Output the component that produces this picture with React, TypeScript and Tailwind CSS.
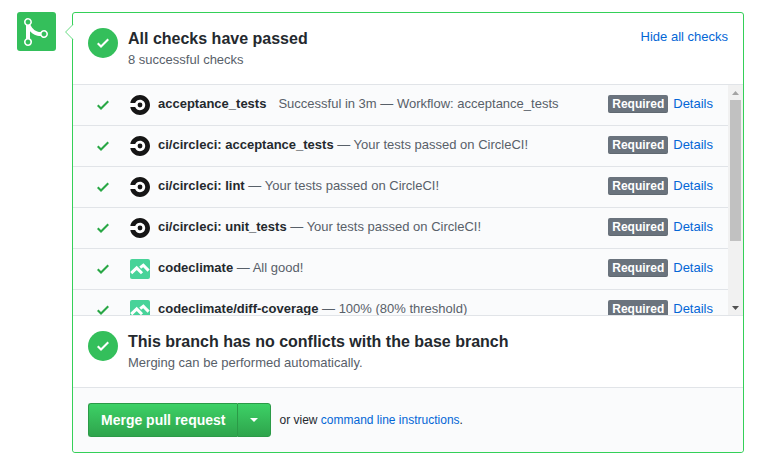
import type { ReactNode } from "react";

type Check = {
  name: string;
  detail: string;
  icon: "circleci" | "codeclimate";
  separator?: boolean;
};

const checks: Check[] = [
  { name: "acceptance_tests", detail: "Successful in 3m — Workflow: acceptance_tests", icon: "circleci", separator: false },
  { name: "ci/circleci: acceptance_tests", detail: "Your tests passed on CircleCI!", icon: "circleci" },
  { name: "ci/circleci: lint", detail: "Your tests passed on CircleCI!", icon: "circleci" },
  { name: "ci/circleci: unit_tests", detail: "Your tests passed on CircleCI!", icon: "circleci" },
  { name: "codeclimate", detail: "All good!", icon: "codeclimate" },
  { name: "codeclimate/diff-coverage", detail: "100% (80% threshold)", icon: "codeclimate" },
];

function CheckMark({ className }: { className: string }) {
  return (
    <svg width="12" height="16" viewBox="0 0 12 16" className={className} aria-hidden="true">
      <path fill="currentColor" d="M12 5l-8 8-4-4 1.5-1.5L4 10l6.5-6.5L12 5z" />
    </svg>
  );
}

function MergeIcon() {
  return (
    <svg width="24" height="32" viewBox="0 0 12 16" aria-hidden="true">
      <path
        fill="currentColor"
        d="M10 7c-.73 0-1.38.41-1.73 1.02V8C7.22 7.98 6 7.64 5.14 6.98c-.75-.58-1.5-1.61-1.89-2.44A1.993 1.993 0 0 0 2 .99C.89.99 0 1.89 0 3a2 2 0 0 0 1 1.72v6.56c-.59.35-1 .99-1 1.72 0 1.11.89 2 2 2a1.993 1.993 0 0 0 1-3.72V7.67c.67.7 1.44 1.27 2.3 1.69.86.42 2.03.63 2.97.64v-.02c.36.61 1 1.02 1.73 1.02 1.11 0 2-.89 2-2 0-1.11-.89-2-2-2zm-6.8 6c0 .66-.55 1.2-1.2 1.2-.65 0-1.2-.55-1.2-1.2 0-.65.55-1.2 1.2-1.2.65 0 1.2.55 1.2 1.2zM2 4.2C1.34 4.2.8 3.65.8 3c0-.65.55-1.2 1.2-1.2.65 0 1.2.55 1.2 1.2 0 .65-.55 1.2-1.2 1.2zm8 6c-.66 0-1.2-.55-1.2-1.2 0-.65.55-1.2 1.2-1.2.65 0 1.2.55 1.2 1.2 0 .65-.55 1.2-1.2 1.2z"
      />
    </svg>
  );
}

function CircleCiLogo() {
  return (
    <svg width="20" height="20" viewBox="0 0 20 20" className="shrink-0" aria-hidden="true">
      <rect width="20" height="20" rx="2" fill="#fff" />
      <circle cx="10" cy="10" r="2.4" fill="#161616" />
      <path
        fill="#161616"
        d="M10 0C5.3 0 1.400 3.200 .3 7.500v.1c0 .3.200.5.500.5h4c.2 0 .4-.1.500-.3C6.100 6 7.900 4.800 10 4.800c2.900 0 5.200 2.300 5.200 5.200s-2.300 5.200-5.200 5.200c-2.100 0-3.900-1.200-4.700-3-.1-.2-.3-.3-.5-.3h-4c-.3 0-.5.2-.5.5v.1C1.400 16.800 5.300 20 10 20c5.500 0 10-4.500 10-10S15.500 0 10 0z"
      />
    </svg>
  );
}

function CodeClimateLogo() {
  return (
    <svg width="20" height="20" viewBox="0 0 20 20" className="shrink-0" aria-hidden="true">
      <rect width="20" height="20" rx="2" fill="#48d399" />
      <path fill="none" stroke="#fff" strokeWidth="3" d="M1.200 14.200L6.700 8.900L12 14.200" />
      <path fill="none" stroke="#fff" strokeWidth="3" d="M10.200 8.600L13.300 6.300L18.600 11.600" />
    </svg>
  );
}

function StatusHeader({ title, text, children }: { title: string; text: string; children?: ReactNode }) {
  return (
    <section className="flex items-start px-[15px] pt-[15px] pb-[14px]">
      <span className="flex size-[30px] shrink-0 items-center justify-center rounded-full bg-[#34bf5b] text-white">
        <CheckMark className="block" />
      </span>
      <div className="ml-[10px] min-w-0 flex-1">
        <h2 className="text-[16px] leading-[22px] font-bold text-[#24292e]">{title}</h2>
        <p className="text-[13px] leading-5 text-[#586069]">{text}</p>
      </div>
      {children}
    </section>
  );
}

function CheckRow({ check }: { check: Check }) {
  return (
    <li className="flex h-[41px] items-center border-b border-[#e1e4e8] pr-[15px] pl-6">
      <CheckMark className="shrink-0 text-[#28a745]" />
      <span className="ml-[21px] flex">{check.icon === "circleci" ? <CircleCiLogo /> : <CodeClimateLogo />}</span>
      <p className="ml-2 min-w-0 flex-1 truncate pb-[2px] text-[#586069]">
        <strong className="font-bold text-[#24292e]">{check.name}</strong>
        {check.separator === false ? <span className="ml-3">{check.detail}</span> : <span> — {check.detail}</span>}
      </p>
      <span className="flex items-center gap-[5px] pb-[2px]">
        <span className="rounded-[2px] bg-[#6a737d] px-1 text-[12px] leading-[18px] font-bold text-white shadow-[inset_0_-1px_0_rgba(27,31,35,0.12)]">
          Required
        </span>
        <a href="#details" className="text-[#0366d6]">
          Details
        </a>
      </span>
    </li>
  );
}

function ScrollTrack() {
  return (
    <div className="flex w-[15px] shrink-0 flex-col items-center bg-[#f1f1f1]" aria-hidden="true">
      <span className="flex h-[15px] items-center">
        <svg width="7" height="4" viewBox="0 0 7 4">
          <path fill="#a3a3a3" d="M3.500 0L7 4H0z" />
        </svg>
      </span>
      <span className="h-[141px] w-[11px] bg-[#c1c1c1]" />
      <span className="mt-auto flex h-[15px] items-center">
        <svg width="7" height="4" viewBox="0 0 7 4">
          <path fill="#505050" d="M0 0H7L3.500 4z" />
        </svg>
      </span>
    </div>
  );
}

export default function App() {
  return (
    <main className="flex items-start bg-white py-3 pr-[21px] pl-[17px] font-['Liberation_Sans',Arial,sans-serif] text-[13px] leading-5 text-[#24292e]">
      <div className="size-[39px] shrink-0 rounded-[3px] bg-[#34bf5b] pt-1 pl-[7px] text-white">
        <MergeIcon />
      </div>

      <div className="relative ml-4 min-w-0 flex-1 rounded-[3px] border border-[#34d058] bg-white">
        <svg width="9" height="16" viewBox="0 0 9 16" className="absolute top-[11px] -left-2" aria-hidden="true">
          <path fill="#fff" d="M9 0L8 .5L.5 8L8 15.500L9 16z" />
          <path fill="none" stroke="#34d058" strokeOpacity=".75" d="M8 .5L.6 8L8 15.500" />
        </svg>

        <StatusHeader title="All checks have passed" text="8 successful checks">
          <button type="button" className="mt-[-1px] cursor-pointer text-[13px] leading-5 text-[#0366d6]">
            Hide all checks
          </button>
        </StatusHeader>

        <div className="flex h-[231px] border-t border-[#e1e4e8] bg-[#fafbfc]">
          <ul className="min-w-0 flex-1 overflow-y-auto [scrollbar-width:none]">
            {checks.map((check) => (
              <CheckRow key={check.name} check={check} />
            ))}
          </ul>
          <ScrollTrack />
        </div>

        <div className="border-t border-[#e1e4e8]">
          <StatusHeader
            title="This branch has no conflicts with the base branch"
            text="Merging can be performed automatically."
          />
        </div>

        <footer className="flex items-center rounded-b-[3px] border-t border-[#e1e4e8] bg-[#fafbfc] p-[15px]">
          <div className="flex h-[34px]">
            <button
              type="button"
              className="cursor-pointer rounded-l-[3px] border border-r-0 border-[#2b9a47] bg-linear-to-b from-[#3dd166] to-[#2ea44c] px-3 text-[14px] leading-5 font-bold text-white"
            >
              Merge pull request
            </button>
            <button
              type="button"
              aria-label="Select merge method"
              className="flex w-[34px] cursor-pointer items-center justify-center rounded-r-[3px] border border-[#2b9a47] bg-linear-to-b from-[#3dd166] to-[#2ea44c] text-white"
            >
              <svg width="8" height="4" viewBox="0 0 8 4" aria-hidden="true">
                <path fill="currentColor" d="M0 0H8L4 4z" />
              </svg>
            </button>
          </div>
          <p className="ml-2 text-[12px] leading-5">
            or view{" "}
            <a href="#instructions" className="text-[#0366d6]">
              command line instructions
            </a>
            .
          </p>
        </footer>
      </div>
    </main>
  );
}
